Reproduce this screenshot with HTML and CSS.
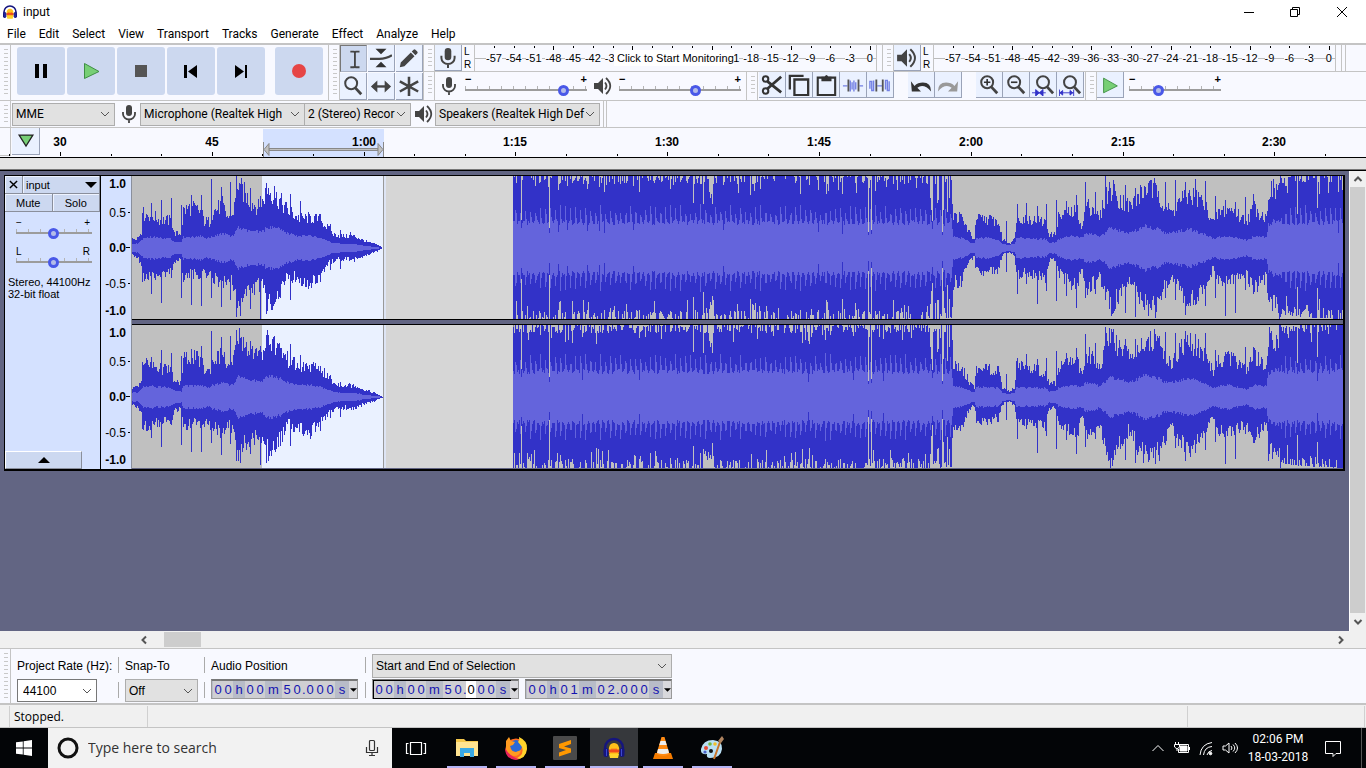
FILE: index.html
```html
<!DOCTYPE html>
<html lang="en">
<head>
<meta charset="utf-8">
<title>input</title>
<link rel="stylesheet" href="styles.css">
</head>
<body>
<svg class="defs" aria-hidden="true">
  <symbol id="logo" viewBox="0 0 24 24">
    <path d="M3 16V12a9 9 0 0 1 18 0v4" fill="none" stroke="#15157e" stroke-width="2.4"/>
    <path d="M7 17c-1-6 1-10 5-10s6 4 5 10l-2 3H9z" fill="#ffc21a"/>
    <path d="M6 15l2-2 1 1 1-2 1 2 1-2 1 2 1-2 1 2 1-1 2 2-2 2-1-1-1 1-1-1-1 1-1-1-1 1-1-1-1 1z" fill="#f04a1c"/>
    <path d="M7 18h10l-1 4H8z" fill="#ffd52c"/>
    <rect x="1.500" y="12" width="5" height="9" rx="2.500" fill="#15157e"/>
    <rect x="17.500" y="12" width="5" height="9" rx="2.500" fill="#15157e"/>
    <path d="M4.500 13v7M19.500 13v7" stroke="#3d49ce" stroke-width="1"/>
  </symbol>
  <symbol id="mic" viewBox="0 0 20 20">
    <rect x="7" y="1" width="6" height="11" rx="3" fill="#444"/>
    <path d="M4 8v2a6 5.500 0 0 0 12 0V8M10 15v4" fill="none" stroke="#444" stroke-width="1.800"/>
  </symbol>
  <symbol id="speaker" viewBox="0 0 20 20">
    <path d="M1 7h4l5-5v16l-5-5H1z" fill="#444"/>
    <path d="M12 6.500q3 3.500 0 7M13 2q8.500 8 0 16" fill="none" stroke="#444" stroke-width="1.800"/>
  </symbol>
  <symbol id="lens" viewBox="0 0 24 24">
    <circle cx="10" cy="9" r="6.500" fill="none" stroke="#444" stroke-width="2.200"/>
    <path d="M14 13.500l7 7.500" stroke="#444" stroke-width="3"/>
  </symbol>
</svg>

<header class="titlebar">
  <svg class="app-icon"><use href="#logo"/></svg>
  <span class="title">input</span>
  <div class="window-buttons">
    <button aria-label="Minimize"><svg viewBox="0 0 12 12"><path d="M1 6.500h10"/></svg></button>
    <button aria-label="Restore"><svg viewBox="0 0 12 12"><path d="M1.500 3.500h7v7h-7zM3.500 3.500v-2h7v7h-2"/></svg></button>
    <button aria-label="Close"><svg viewBox="0 0 12 12"><path d="M1 1l10 10M11 1L1 11"/></svg></button>
  </div>
</header>

<nav class="menubar">
  <button>File</button><button>Edit</button><button>Select</button><button>View</button><button>Transport</button><button>Tracks</button><button>Generate</button><button>Effect</button><button>Analyze</button><button>Help</button>
</nav>

<section class="toolbars">
  <div class="toolbar">
    <i class="grip"></i>
    <div class="transport">
      <button aria-label="Pause"><svg viewBox="0 0 48 48"><path d="M18 17h4v14h-4zM26 17h4v14h-4z"/></svg></button>
      <button aria-label="Play"><svg viewBox="0 0 48 48"><path d="M17.500 16.500L32 24.500 17.500 31.500z" fill="#77cf75" stroke="#3f8f45"/></svg></button>
      <button aria-label="Stop"><svg viewBox="0 0 48 48"><path d="M18 18h12v12H18z" fill="#555"/></svg></button>
      <button aria-label="Skip to start"><svg viewBox="0 0 48 48"><path d="M17 18h3v13h-3zM30 18v13l-9-6.500z"/></svg></button>
      <button aria-label="Skip to end"><svg viewBox="0 0 48 48"><path d="M28 18h2v13h-2zM18 18v13l9-6.500z"/></svg></button>
      <button class="record" aria-label="Record"><svg viewBox="0 0 48 48"><circle cx="24" cy="24" r="7" fill="#e64545"/></svg></button>
    </div>
  </div>
  <div class="toolbar">
    <i class="grip"></i>
    <div class="tools">
      <button class="tool pressed" aria-label="Selection tool"><svg viewBox="0 0 24 24"><path d="M8 4h4l1 1 1-1h4M13 5v15M8 21h4l1-1 1 1h4" fill="none" stroke="#444" stroke-width="2"/></svg></button>
      <button class="tool" aria-label="Envelope tool"><svg viewBox="0 0 24 24"><path d="M6 2h12l-6 6zM6 22h12l-6-6z" fill="#333"/><path d="M0 13h10q8 0 14-4" fill="none" stroke="#444" stroke-width="2.500"/></svg></button>
      <button class="tool" aria-label="Draw tool"><svg viewBox="0 0 24 24"><path d="M2 22l1-5L14 6l4 4L7 21zM15 5l2-2q1-1 2 0l2 2q1 1 0 2l-2 2z" fill="#444"/></svg></button>
      <button class="tool" aria-label="Zoom tool"><svg viewBox="0 0 24 24"><use href="#lens"/></svg></button>
      <button class="tool" aria-label="Time shift tool"><svg viewBox="0 0 24 24"><path d="M3 12.500h18" stroke="#444" stroke-width="2.600"/><path d="M8 6v13l-7-6.500zM16 6v13l7-6.500z" fill="#444"/></svg></button>
      <button class="tool" aria-label="Multi-tool"><svg viewBox="0 0 24 24"><path d="M12 2v21M2 7l20 11M22 7L2 18" stroke="#444" stroke-width="2.800"/></svg></button>
    </div>
  </div>
  <div class="stack">
    <div class="strip">
      <div class="toolbar meter-bar">
        <i class="grip"></i>
        <button class="tool" aria-label="Recording meter"><svg viewBox="0 0 20 20"><use href="#mic"/></svg></button>
        <div class="channels"><span>L</span><span>R</span></div>
        <div class="meter"><div class="scale" data-covered="-36 -33 -30 -27 -24"></div><span class="monitor">Click to Start Monitoring</span></div>
      </div>
      <div class="toolbar meter-bar">
        <i class="grip"></i>
        <button class="tool" aria-label="Playback meter"><svg viewBox="0 0 20 20"><use href="#speaker"/></svg></button>
        <div class="channels"><span>L</span><span>R</span></div>
        <div class="meter"><div class="scale"></div></div>
      </div>
      <div class="strip-end"></div>
    </div>
    <div class="strip">
      <div class="toolbar mixer">
        <i class="grip"></i>
        <svg class="device-icon"><use href="#mic"/></svg>
        <div class="slider"><div><span>−</span><span>+</span></div><input type="range" min="0" max="100" value="84" aria-label="Recording volume"></div>
        <svg class="device-icon"><use href="#speaker"/></svg>
        <div class="slider"><div><span>−</span><span>+</span></div><input type="range" min="0" max="100" value="64" aria-label="Playback volume"></div>
      </div>
      <div class="toolbar edit">
        <i class="grip"></i>
        <div class="group">
          <button class="tool" aria-label="Cut"><svg viewBox="0 0 24 24"><g fill="none" stroke="#333" stroke-width="2.200"><circle cx="5" cy="5.500" r="3"/><circle cx="5" cy="18.500" r="3"/><path d="M7 8l15 12M7 16L22 3" stroke-width="3"/></g></svg></button>
          <button class="tool" aria-label="Copy"><svg viewBox="0 0 24 24"><path d="M2 17V2h15M7 6h15v17H7z" fill="none" stroke="#333" stroke-width="2.500"/></svg></button>
          <button class="tool" aria-label="Paste"><svg viewBox="0 0 24 24"><path d="M3 4h19v19H3z" fill="none" stroke="#333" stroke-width="2.300"/><path d="M7 3h3.500q2-4 4 0H18v5H7z" fill="#333"/></svg></button>
          <button class="tool" aria-label="Trim audio"><svg viewBox="0 0 24 24"><path d="M1 13h5M19 13h4M9 7v12M11 9v8M13 7v12M15 9v8" stroke="#7380e4" stroke-width="1.500"/><path d="M7 6v13M18 6v13" stroke="#555" stroke-width="2"/></svg></button>
          <button class="tool" aria-label="Silence audio"><svg viewBox="0 0 24 24"><path d="M1 16V8h2v10h2V7M18 17V7h2v11h2V8M9 13h6" fill="none" stroke="#7380e4" stroke-width="1.500"/><path d="M8 6v13M15 6v13" stroke="#555" stroke-width="2"/></svg></button>
        </div>
        <div class="group">
          <button class="tool" aria-label="Undo"><svg viewBox="0 0 24 24"><path d="M1 8l1 11h10l-4-4q7-5 15 4 0-12-14-9-3 1-4 3z" fill="#333"/></svg></button>
          <button class="tool" aria-label="Redo"><svg viewBox="0 0 24 24"><path d="M23 8l-1 11H12l4-4q-7-5-15 4 0-12 14-9 3 1 4 3z" fill="#999"/></svg></button>
        </div>
        <div class="group">
          <button class="tool" aria-label="Zoom in"><svg viewBox="0 0 24 24"><use href="#lens"/><path d="M10 5.500v7M6.500 9h7" stroke="#333" stroke-width="1.800"/></svg></button>
          <button class="tool" aria-label="Zoom out"><svg viewBox="0 0 24 24"><use href="#lens"/><path d="M6.500 9h7" stroke="#333" stroke-width="1.800"/></svg></button>
          <button class="tool" aria-label="Fit selection"><svg viewBox="0 0 24 24"><use href="#lens" x="2"/><path d="M0 20.500h15M4 17l4 3.500L4 24zM12 17l-4 3.500 4 3.500z" fill="#3232c8" stroke="#3232c8"/></svg></button>
          <button class="tool" aria-label="Fit project"><svg viewBox="0 0 24 24"><use href="#lens" x="2"/><path d="M0.500 17v7M16 17v7M1 20.500h15M4 18l-3 2.500L4 23zM12 18l3 2.500-3 2.500z" fill="#3232c8" stroke="#3232c8"/></svg></button>
        </div>
      </div>
      <div class="toolbar">
        <i class="grip"></i>
        <button class="tool" aria-label="Play at speed"><svg viewBox="0 0 24 24"><path d="M5 4.500L20 13 5 20.500z" fill="#77cf75" stroke="#3f8f45"/></svg></button>
        <div class="slider speed"><div><span>−</span><span>+</span></div><input type="range" min="0" max="100" value="30" aria-label="Playback speed"></div>
      </div>
    </div>
  </div>
</section>

<section class="devices">
  <i class="grip"></i>
  <select class="host" aria-label="Audio host"><option>MME</option></select>
  <svg class="device-icon"><use href="#mic"/></svg>
  <select class="rec" aria-label="Recording device"><option>Microphone (Realtek High</option></select>
  <select class="chan" aria-label="Recording channels"><option>2 (Stereo) Recor</option></select>
  <svg class="device-icon"><use href="#speaker"/></svg>
  <select class="play" aria-label="Playback device"><option>Speakers (Realtek High Def</option></select>
  <i class="end"></i>
</section>

<section class="ruler">
  <i class="ruler-edge"></i>
  <button class="tool pin" aria-label="Pinned play head"><svg viewBox="0 0 24 24"><path d="M4.500 5.500h15L12 17.500z" fill="#77cf75" stroke="#222" stroke-width="1.400"/></svg></button>
  <svg class="timeline" id="timeline"></svg>
</section>
<div class="ruler-gap"></div>

<main class="workspace">
  <div class="tracks">
    <article class="track">
      <aside class="panel">
        <div class="panel-row name"><button aria-label="Close track"><svg viewBox="0 0 10 10"><path d="M1 1l8 8M9 1L1 9" stroke="#000" stroke-width="1.600"/></svg></button><button class="track-menu">input<svg viewBox="0 0 12 6"><path d="M0 0h12L6 6z"/></svg></button></div>
        <div class="panel-row"><button>Mute</button><button>Solo</button></div>
        <div class="slider gain"><div><span>−</span><span>+</span></div><input type="range" min="0" max="100" value="49" aria-label="Gain"></div>
        <div class="slider gain"><div><span>L</span><span>R</span></div><input type="range" min="0" max="100" value="49" aria-label="Pan"></div>
        <p>Stereo, 44100Hz<br>32-bit float</p>
        <button class="collapse" aria-label="Collapse"><svg viewBox="0 0 12 6"><path d="M0 6h12L6 0z"/></svg></button>
      </aside>
      <div class="vrulers"><svg class="vruler"></svg><svg class="vruler"></svg></div>
      <div class="waves">
        <svg class="wave" viewBox="0 0 1211 143" preserveAspectRatio="none" role="img" aria-label="Left channel"></svg>
        <svg class="wave" viewBox="0 0 1211 143" preserveAspectRatio="none" role="img" aria-label="Right channel"></svg>
      </div>
    </article>
  </div>
  <div class="vscroll">
    <button aria-label="Scroll up"><svg viewBox="0 0 10 10"><path d="M1.500 7L5 3.500 8.500 7"/></svg></button>
    <i></i>
    <button aria-label="Scroll down"><svg viewBox="0 0 10 10"><path d="M1.500 3L5 6.500 8.500 3"/></svg></button>
  </div>
</main>
<div class="hscroll">
  <button aria-label="Scroll left"><svg viewBox="0 0 10 10"><path d="M7 1.500L3.500 5 7 8.500"/></svg></button>
  <i></i>
  <button aria-label="Scroll right"><svg viewBox="0 0 10 10"><path d="M3 1.500L6.500 5 3 8.500"/></svg></button>
</div>

<section class="selection">
  <i class="grip"></i>
  <div class="field rate"><label for="rate">Project Rate (Hz):</label><select id="rate"><option>44100</option></select></div>
  <div class="sep"><i></i><i></i></div>
  <div class="field snap"><label for="snap">Snap-To</label><select id="snap"><option>Off</option></select></div>
  <div class="sep"><i></i><i></i></div>
  <div class="field"><span class="label">Audio Position</span><div class="time" data-time="00h00m50.000s"></div></div>
  <div class="sep wide"><i></i><i></i></div>
  <div class="field range"><select aria-label="Selection mode"><option>Start and End of Selection</option></select><div class="times"><div class="time focused" data-time="00h00m50.000s"></div><div class="time" data-time="00h01m02.000s"></div></div></div>
</section>

<footer class="status"><span>Stopped.</span><span></span><span></span></footer>

<div class="taskbar">
  <button class="start" aria-label="Start"><svg viewBox="0 0 16 16"><path d="M0 2.300L6.800 1.400v6.200H0zM7.600 1.300L16 0v7.600H7.600zM0 8.400h6.800v6.200L0 13.700zM7.600 8.400H16V16l-8.400-1.300z" fill="#fff"/></svg></button>
  <div class="search">
    <svg class="cortana" viewBox="0 0 22 22"><circle cx="11" cy="11" r="9" fill="none" stroke="#111" stroke-width="3"/></svg>
    <input type="text" placeholder="Type here to search" aria-label="Search">
    <svg class="search-mic" viewBox="0 0 14 18"><rect x="4.500" y="1.500" width="5" height="10" rx="1"/><path d="M1.500 8v5.500h11V8M7 13.500v3M4 16.500h6"/></svg>
  </div>
  <button class="task view" aria-label="Task view"><svg viewBox="0 0 24 24"><path d="M6.500 6.500h11v12h-11zM4.500 7.500h-2v10h2M19.500 7.500h2v10h-2" fill="none" stroke="#fff" stroke-width="1.200"/></svg></button>
  <button class="task open" aria-label="File Explorer"><svg viewBox="0 0 24 24"><path d="M1 3h8l2 2h12v5H1z" fill="#f5c84c"/><path d="M1 6h22v14H1z" fill="#ffe491"/><path d="M5 21v-9h14v9h-4v-4H9v4z" fill="#3aa9e4"/></svg></button>
  <button class="task open" aria-label="Firefox"><svg viewBox="0 0 24 24"><circle cx="12" cy="13" r="10.500" fill="#ff6a21"/><circle cx="12" cy="10" r="6" fill="#2869d8"/><path d="M15 1q9 4 8 12-1 10-11 10 9-5 6-12-2-3-4-5 2-2 1-5z" fill="#ffd42c"/><path d="M2 5l3-4 2 4 4 1-2 3-3 1q1 6 6 6l5-2q-1 6-7 6-9-1-8-9z" fill="#ff9b20"/><path d="M1 12q0 11 11 12l3-1q-9-2-14-11z" fill="#e8235a"/></svg></button>
  <button class="task open" aria-label="Sublime Text"><svg viewBox="0 0 24 24"><rect width="24" height="24" rx="1" fill="#4a4a4a"/><path d="M6 8l12-4v4l-7 2.500 7 2v4L6 20.500v-4l7-2.500-7-2z" fill="#ff9800"/></svg></button>
  <button class="task open active" aria-label="Audacity"><svg><use href="#logo"/></svg></button>
  <button class="task open" aria-label="VLC"><svg viewBox="0 0 24 24"><path d="M4 17h16l2 6H2z" fill="#f57c00"/><path d="M10.500 1h3l5 17q-6 4-13 0z" fill="#ff8b13"/><path d="M9.500 5h5l1.200 4H8.300zM7 13h10l1 4q-6 2-12 0z" fill="#eee"/></svg></button>
  <button class="task open" aria-label="Paint"><svg viewBox="0 0 24 24"><path d="M1 13Q3 4 13 4q10 1 9 9-1 9-12 9-4 0-3-4-7 1-6-5z" fill="#b9e0f4"/><circle cx="6" cy="12" r="2" fill="#e94b35"/><circle cx="10" cy="8" r="1.800" fill="#71b843"/><circle cx="15" cy="8" r="1.800" fill="#f4bf28"/><circle cx="5" cy="16" r="1.600" fill="#4a62c9"/><circle cx="11" cy="15" r="2" fill="#111"/><path d="M14 23l6-17" stroke="#c9752b" stroke-width="2"/><path d="M18 5l4-5 2 3-3 4z" fill="#b08560"/></svg></button>
  <div class="tray">
    <svg viewBox="0 0 16 16"><path d="M2.500 11L8 5.500l5.500 5.500"/></svg>
    <svg viewBox="0 0 16 16"><path d="M5 4.500h9.500v8h-10V9M15.500 7v3M.5 4.500h5V7L3 9 .5 7zM1.500 4V2M4.500 4V2M3 9v2"/><path d="M6 6h7v5H6z" fill="#fff"/></svg>
    <svg viewBox="0 0 16 16"><path d="M2 15Q3 4 14 2.500M5.500 15q1-8 8.500-8.500M9 15q1-4 5-4.500"/><circle cx="12.500" cy="13.500" r="1.300" fill="#fff"/></svg>
    <svg viewBox="0 0 16 16"><path d="M1 6h2.500L7 3v10l-3.500-3H1zM9 6q2 2 0 4M11 4.500q3.500 3.500 0 7M13 3q5 5 0 10"/></svg>
    <div class="clock"><time>02:06 PM</time><time>18-03-2018</time></div>
    <svg class="notes" viewBox="0 0 18 18"><path d="M1.500 2.500h15v12H12l-3 3v-3H1.500z"/></svg>
    <i></i>
  </div>
</div>
<script src="app.js"></script>
</body>
</html>
```
FILE: styles.css
```css
* { box-sizing: border-box; }
body {
  margin: 0;
  min-height: 100vh;
  display: flex;
  flex-direction: column;
  background: #f8f9ff;
  color: #000;
  font: 12px/16px Roboto, "Open Sans", sans-serif;
}
button, input, select { font: inherit; color: inherit; }
button {
  border: 0;
  padding: 0;
  background: none;
  display: flex;
  align-items: center;
  justify-content: center;
}
svg { display: block; flex: none; }
.defs { display: none; }

.titlebar { display: flex; align-items: center; height: 24px; background: #fff; }
.app-icon { width: 16px; height: 16px; margin: 0 5px 0 2px; }
.window-buttons { display: flex; margin-left: auto; height: 20px; }
.window-buttons button { width: 46px; }
.window-buttons button:last-child { width: 48px; }
.window-buttons svg { width: 12px; height: 12px; fill: none; stroke: #000; }

.menubar { display: flex; height: 19px; background: #fff; }
.menubar button { padding: 0 6px 0 7px; }

.toolbars { display: flex; height: 58px; border-top: 2px solid #c4c4c4; border-bottom: 1px solid #c4c4c4; }
.toolbar { display: flex; border-right: 1px solid #c4c4c4; }
.grip {
  flex: none;
  width: 11px;
  align-self: stretch;
  border-right: 1px solid #c4c4c4;
  background: repeating-linear-gradient(#c8c8c8 0 1px, transparent 1px 4px) 4px 4px / 4px calc(100% - 8px) no-repeat;
}
.transport { display: flex; gap: 2px; padding: 2px 5px 4px 6px; }
.transport button { width: 48px; height: 48px; border-radius: 3px; background: #ccd8ef; }
.transport .record { margin-left: 8px; }
.transport svg { width: 48px; height: 48px; }
.tools { display: grid; grid-template-columns: repeat(3, 27px); gap: 1px; }
.tool { width: 27px; height: 27px; flex: none; background: #eaf1ff; border-right: 1px solid #9aa3b8; border-bottom: 1px solid #9aa3b8; }
.tool svg { width: 22px; height: 22px; }
.tool.pressed { background: #ccd8ef; border: 1px solid #aab2c4; border-top-color: #777; border-left-color: #777; }
.stack { flex: 1; min-width: 0; }
.strip { display: flex; height: 27px; }
.strip:first-child { border-bottom: 1px solid #c4c4c4; }
.strip:last-child { height: 28px; }
.stack .tool { height: 26px; }
.meter-bar { flex: 1; min-width: 0; padding-right: 5px; }
.strip-end { width: 24px; border-left: 1px solid #f8f9ff; padding-left: 2px; }
.strip-end::before { content: ""; display: block; width: 1px; height: 100%; background: #c4c4c4; }
.channels { display: flex; flex-direction: column; width: 12px; padding: 0 2px; font: 10px/13px "Liberation Sans", sans-serif; }
.meter { flex: 1; min-width: 0; position: relative; border-left: 1px solid #c4c4c4; border-right: 1px solid #c4c4c4; background: linear-gradient(#bbb, #bbb) 0 13px / 100% 1px no-repeat; }
.scale { display: flex; justify-content: space-between; margin: 0 -3px 0 10px; font: 11px/14px "Liberation Sans", sans-serif; }
.scale span { width: 18px; height: 20px; padding-top: 6px; text-align: center; background: linear-gradient(#000, #000) 9px 1px / 1px 2px no-repeat; }
.scale span:nth-child(4n) { background-size: 1px 4px; }
.scale b { font-weight: normal; background: #f8f9ff; }
.monitor { position: absolute; left: 139px; top: 5px; padding: 0 0 0 3px; background: #fff; font: 11px/16px "Liberation Sans", sans-serif; white-space: nowrap; }

.device-icon { width: 20px; height: 20px; align-self: center; }
.mixer { padding-right: 3px; }
.mixer .device-icon { margin: 0 4px; }
.slider { width: 122px; padding-top: 1px; flex: none; }
.mixer .slider { margin: 0 2px; }
.slider div { display: flex; justify-content: space-between; height: 11px; font: bold 11px/12px "Liberation Sans", sans-serif; }
.slider input {
  display: block;
  appearance: none;
  width: 100%;
  height: 12px;
  margin: 0;
  background:
    linear-gradient(#9c9c9c, #9c9c9c) 0 5px / 100% 2px no-repeat,
    repeating-linear-gradient(90deg, #b4b4b4 0 1px, transparent 1px 12px) 0 2px / 100% 3px no-repeat;
}
.slider input::-webkit-slider-thumb { appearance: none; width: 11px; height: 11px; border-radius: 50%; border: 3px solid #4958e8; background: #b4bce8; }
.edit .group { display: flex; padding-left: 1px; }
.edit .group + .group { padding-left: 14px; }
.edit { padding-right: 1px; }
.slider.speed { width: 92px; margin-left: 5px; }
.strip .toolbar:last-child { border-right: 0; }

.devices { display: flex; align-items: center; height: 27px; border-bottom: 1px solid #c4c4c4; }
select {
  appearance: none;
  height: 23px;
  border: 1px solid #adadad;
  border-radius: 0;
  padding: 0 16px 0 3px;
  white-space: nowrap;
  background: #e1e1e1 url("data:image/svg+xml,%3Csvg xmlns='http://www.w3.org/2000/svg' width='10' height='6'%3E%3Cpath d='M1 1l4 4 4-4' fill='none' stroke='%23555'/%3E%3C/svg%3E") right 4px center no-repeat;
}
.devices .device-icon { margin: 0 2px 0 3px; }
.devices .grip { margin-right: 1px; }
.host { width: 103px; margin-right: 1px; }
.rec { width: 165px; margin-left: -1px; }
.chan { width: 107px; margin-left: -1px; padding-right: 12px; }
.play { width: 165px; margin-left: -1px; padding-right: 12px; }
.end { width: 4px; margin-left: 3px; align-self: stretch; border: 1px solid #c4c4c4; border-width: 0 1px; }

.ruler { display: flex; height: 30px; border-bottom: 1px solid #000; }
.ruler-edge { width: 11px; height: 28px; border: 1px solid #c4c4c4; border-width: 0 1px 1px 0; }
.pin { width: 28px; margin-left: 1px; }
.timeline { flex: 1; min-width: 0; height: 29px; margin-left: -40px; position: relative; pointer-events: none; overflow: hidden; }
.timeline text { font: bold 12px "Liberation Sans", sans-serif; text-anchor: middle; }
.ruler-gap { height: 13px; background: #e3e3e3; border-bottom: 1px solid #000; box-shadow: inset 0 -1px #777; }

.workspace { flex: 1; display: flex; min-height: 0; background: #626583; }
.tracks { flex: 1; min-width: 0; padding: 4px 4px 0 4px; }
.track { display: flex; height: 296px; border: 1px solid #000; border-bottom-width: 2px; border-right-width: 2px; }
.panel { width: 96px; display: flex; flex-direction: column; background: #d4e1ff; border-right: 1px solid #000; font: 11px/12px "Liberation Sans", sans-serif; }
.panel-row { display: flex; height: 18px; }
.panel-row button { flex: 1; background: #ccd8f0; border: 1px solid #8a8f9c; border-width: 0 1px 1px 0; box-shadow: inset 1px 1px #eef3ff; }
.panel-row.name button:first-child { flex: none; width: 18px; }
.panel-row svg { width: 9px; height: 9px; }
.panel-row .track-menu { justify-content: space-between; padding: 0 2px 0 3px; }
.track-menu svg { width: 12px; height: 6px; }
.slider.gain { width: 76px; margin: 4px 0 0 11px; padding-top: 1px; }
.slider.gain div { height: 10px; font-weight: normal; padding-right: 2px; }
.slider.gain:nth-child(4) { margin-top: 6px; }
.slider.gain div span { font-size: 10px; }
.panel p { margin: 8px 0 0 3px; white-space: nowrap; }
.collapse { width: 77px; height: 18px; margin-top: auto; background: #ccd8f0; border: 1px solid #8a8f9c; border-top-color: #fff; border-left-color: #fff; }
.collapse svg { width: 12px; height: 6px; }
.vrulers { width: 31px; background: #d4e1ff; display: flex; flex-direction: column; gap: 6px; border-right: 1px solid #8a8f9c; }
.vruler { width: 30px; height: 143px; overflow: visible; }
.vruler text { font: 12px "Liberation Sans", sans-serif; text-anchor: end; }
.vruler .strong { font-weight: bold; }
.waves { flex: 1; min-width: 0; background: #626583; display: flex; flex-direction: column; gap: 4px; }
.wave { width: 100%; height: 144px; border-bottom: 1px solid #000; }
.wave + .wave { border-top: 1px solid #000; border-bottom: 0; }

.vscroll { width: 17px; display: flex; flex-direction: column; background: #f0f0f0; border-left: 1px solid #fff; }
.vscroll i { flex: 1; background: #cdcdcd; margin-right: 1px; }
.vscroll button { height: 16px; }
.vscroll button:last-child { height: 18px; }
.vscroll svg, .hscroll svg { width: 10px; height: 10px; fill: none; stroke: #555; stroke-width: 2; }
.hscroll { display: flex; height: 18px; padding: 1px 17px 1px 136px; background: #f0f0f0; border-bottom: 1px solid #c4c4c4; }
.hscroll button { width: 16px; }
.hscroll i { width: 37px; margin: 0 auto 0 12px; background: #cdcdcd; }

.selection { display: flex; height: 56px; border-bottom: 2px solid #c4c4c4; font-family: "Liberation Sans", sans-serif; }
.field { display: flex; flex-direction: column; }
.field label, .field .label { height: 30px; padding-top: 9px; white-space: nowrap; }
.rate { margin-left: 6px; width: 95px; }
.rate select { width: 80px; background-color: #fff; border-color: #777; padding-left: 5px; }
.snap select { width: 73px; }
.field.range select { width: 300px; height: 24px; margin: 5px 0 1px; }
.sep { width: 7px; margin-left: 6px; display: flex; flex-direction: column; gap: 9px; padding-top: 8px; }
.sep i { width: 1px; height: 16px; background: #aaa; }
.sep.wide { margin-left: 7px; }
.times { display: flex; gap: 6px; }
.time { display: flex; width: 147px; height: 20px; padding-left: 1px; border: 1px solid #999; border-top: 2px solid #777; background: #b8bcc8; color: #1414b0; font-size: 13px; line-height: 17px; text-align: center; }
.time span { width: 10px; background: #cfcfd2; }
.time .h { width: 12px; background: none; }
.time .m { width: 17px; background: none; }
.time .dot { width: 3px; }
.time .s { width: 14px; background: none; }
.time button { flex: 1; background: #d8d8dc; }
.time button svg { width: 7px; height: 4px; }
.digits { display: flex; }
.focused .digits { outline: 1px solid #000; }
.focused .digits span:nth-child(10) { background: #fff; color: #000; }

.status { display: flex; height: 23px; background: #f0f0f0; border-bottom: 1px solid #c4c4c4; padding: 1px 1px 0 9px; font: 12px/22px "Open Sans", sans-serif; }
.status span { border-left: 1px solid #d0d0d0; padding-left: 4px; width: 138px; }
.status span:nth-child(2) { flex: 1; }
.status span:last-child { width: 178px; border-right: 1px solid #d0d0d0; }

.taskbar { display: flex; height: 40px; background: #030507; color: #fff; }
.start { width: 48px; }
.start svg { width: 16px; height: 16px; }
.search { display: flex; align-items: center; width: 344px; padding: 0 13px 0 9px; background: #f2f2f2; }
.cortana { width: 22px; height: 22px; }
.search input { flex: 1; min-width: 0; margin-left: 8px; border: 0; padding: 0 1px; background: none; color: #333; font: 14px/20px "Open Sans", sans-serif; }
.search input::placeholder { color: #333; }
.search-mic { width: 14px; height: 18px; fill: none; stroke: #333; stroke-width: 1.2; }
.task svg { width: 24px; height: 24px; }
.view { width: 48px; margin-right: 3px; }
.open { margin: 0 5px 0 4px; width: 40px; box-shadow: inset 0 -2px #b4b4f4; }
.active { width: 48px; margin: 0 1px 0 0; background: #36383c; }
.tray { display: flex; align-items: center; margin-left: auto; }
.tray svg { width: 16px; height: 16px; margin-right: 8px; fill: none; stroke: #fff; }
.clock { display: flex; flex-direction: column; align-items: center; width: 64px; margin-right: 14px; line-height: 18px; }
.tray .notes { width: 18px; height: 18px; margin-right: 19px; }
.tray i { width: 5px; height: 40px; border-left: 1px solid #555; }
```
FILE: app.js
```javascript
const rect = (x, y, w, h, fill) => `<rect x="${x}" y="${y}" width="${w}" height="${h}" fill="${fill}"/>`;

// Level meters: -57 dB up to 0 dB in steps of 3; labels under the monitoring hint are left out
document.querySelectorAll('.scale').forEach(scale => {
  const covered = (scale.dataset.covered || '').split(' ');
  for (let db = -57; db <= 0; db += 3) scale.innerHTML += covered.includes(String(db)) ? '<span></span>' : `<span><b>${db}</b></span>`;
});

// Time ruler: one tick every 5 seconds, a label every 15
const labels = ['30', '45', '1:00', '1:15', '1:30', '1:45', '2:00', '2:15', '2:30'];
let ruler = rect(263, 1, 121, 28, '#d4e1ff');
for (let i = -1; i < 26; i++) {
  const x = Math.round(60 + i * 50.6);
  const major = i % 3 === 0;
  ruler += rect(x, major ? 24 : 26, 1, major ? 4 : 2, '#000');
  if (major) ruler += `<text x="${x}" y="18">${labels[i / 3]}</text>`;
}
ruler += '<path d="M263.500 14v15M383.500 14v15" stroke="#888"/><path d="M269 20.500h109v2H269z" fill="#c0c0c0" stroke="#888"/><path d="M264 21.500l5-6v12zM383 21.500l-5-6v12z" fill="#c0c0c0" stroke="#888"/>';
document.getElementById('timeline').innerHTML = ruler;

document.querySelectorAll('.vruler').forEach(el => {
  el.innerHTML = [['1.0', 12, 1], ['0.5', 41, 0], ['0.0', 76, 1], ['-0.5', 112, 0], ['-1.0', 139, 1]]
    .map(([t, y, strong]) => `<text x="25" y="${y}" class="${strong ? 'strong' : ''}">${t}</text>`).join('')
    + rect(27, 36, 2, 1, '#000') + rect(25, 71, 4, 1, '#000') + rect(27, 107, 2, 1, '#000');
});

// Envelope: [x, peak above, peak below, rms]
const envelope = [
  [132,9,8,4],[138,11,11,5],[141,17,18,8],[143,35,32,10],[150,34,28,11],[160,29,27,10],[171,28,24,9],[174,15,14,6],[181,15,12,6],[183,38,30,11],
  [190,42,28,11],[201,37,28,12],[204,27,26,10],[209,27,28,10],[213,38,30,12],[222,44,36,14],[226,34,34,14],[230,28,28,12],[234,42,40,13],
  [237,68,60,21],[244,56,48,18],[250,48,42,17],[260,40,38,16],[263,50,42,17],[267,62,55,21],[275,52,52,20],[280,48,42,18],[288,38,28,14],
  [300,30,32,12],[310,31,36,12],[320,29,28,10],[328,20,16,7],[333,14,13,5],[345,12,11,4],[355,12,12,4],[365,7,7,2],[375,4,4,1],[383,0,0,0],
  [384,0,0,0],[512,0,0,0],[513,73,71,28],[930,73,71,28],[951,72,70,27],[953,32,36,11],[961,31,33,10],[966,22,18,8],[971,12,11,5],
  [974,10,10,5],[976,30,24,10],[985,30,24,10],[998,27,22,9],[1002,9,7,4],[1009,5,4,3],[1014,9,8,4],[1016,32,26,10],[1030,30,26,9],[1045,26,30,9],
  [1049,14,12,5],[1055,14,12,6],[1058,32,26,9],[1070,36,36,12],[1077,38,38,11],[1082,20,18,11],[1085,44,44,14],[1093,41,36,14],[1099,29,27,11],
  [1105,54,48,15],[1110,60,62,20],[1120,50,48,17],[1130,42,32,15],[1135,50,48,17],[1145,60,60,22],[1158,60,58,19],[1164,42,40,15],[1172,36,30,15],
  [1180,50,46,17],[1190,55,52,19],[1200,50,44,15],[1208,38,30,12],[1213,26,22,9],[1218,36,35,11],[1230,40,35,12],[1240,32,30,9],[1246,28,28,8],
  [1254,42,42,12],[1262,34,33,11],[1266,30,30,11],[1268,60,56,24],[1275,58,56,27],[1281,70,66,27],[1300,73,69,28],[1344,74,71,28]
];
const spikes = [
  [142,35,34],[151,45,46],[161,48,55],[171,50,30],[181,43,50],[191,53,57],[201,53,58],[211,69,50],[221,61,59],[230,66,52],[236,72,69],[240,64,68],
  [250,60,61],[260,52,72],[266,65,66],[274,62,56],[280,50,50],[290,54,52],[300,47,30],[309,34,38],[320,34,34],[330,24,22],[340,18,21],[350,16,12],
  [1006,27,24],[1017,44,46],[1026,45,36],[1037,42,56],[1046,44,43],[1056,48,53],[1066,47,48],[1076,53,60],[1085,66,50],[1095,56,46],[1105,72,52],[1113,68,65],
  [1125,63,65],[1135,60,69],[1148,65,68],[1155,65,70],[1165,66,50],[1175,68,52],[1185,66,67],[1195,69,57],[1205,67,58],[1215,52,50],[1225,48,68],[1235,46,65],[1245,51,42],[1253,54,46]
];
// Columns of the loud passage where the level dips: x -> peak
const dips = {521:28,549:20,693:45,703:44,709:56,710:50,711:54,712:44,868:16,869:60,871:18,930:50,931:38,932:27,937:45,938:48,942:16,943:38,947:36,949:50,1297:34,1317:40};

const noise = (n, seed) => { const v = Math.sin(n * 12.9898 + seed * 78.233) * 43758.5453; return v - Math.floor(v); };

function at(x) {
  let i = 0;
  while (i < envelope.length - 2 && envelope[i + 1][0] <= x) i++;
  const a = envelope[i], b = envelope[i + 1], t = (x - a[0]) / (b[0] - a[0]);
  return [1, 2, 3].map(k => a[k] + (b[k] - a[k]) * t);
}

document.querySelectorAll('.wave').forEach((svg, channel) => {
  let peaks = '', rms = '';
  for (let x = 132; x < 1343; x++) {
    if (x > 382 && x < 513) continue;
    let [up, down, body] = at(x);
    const loud = (x >= 513 && x < 952) || x >= 1281;
    const r = noise(x, 1 + channel * 3), q = noise(x, 2 + channel * 3);
    if (loud) {
      up -= r > .92 ? 8 + q * 12 : r > .5 - channel * .2 ? q * 9 : 0;
      down -= q > .9 ? 6 + r * 14 : q > .45 ? r * 9 : 0;
      body += x % 5 === 0 ? 5 + r * 11 : x % 5 === 1 ? q * 7 : -q * 5;
      if (r > .97) body -= 9;
      const dip = dips[x];
      if (dip) { up = dip; down = dip + 8 * q; body = Math.min(body, dip * .6 + 3); }
    } else {
      up *= .76 + r * .42;
      down *= .76 + q * .42;
      body *= .9 + noise(x, 9 + channel) * .2;
    }
    const spike = spikes.find(s => s[0] === x);
    if (spike) { up = spike[1] - channel * 6 * r; down = spike[2] - channel * 5 * q; }
    const px = x - 132;
    const bar = (a, b) => `M${px} ${a}h1V${b}h-1z`;
    peaks += bar(Math.max(0, Math.round(72 - up)), Math.min(143, Math.round(72 + down)));
    if (body > .5) rms += bar(Math.round(72 - body), Math.round(72 + body));
  }
  svg.innerHTML = '<g shape-rendering="crispEdges">' + rect(0, 0, 1211, 143, '#c0c0c0') + rect(130, 0, 121, 143, '#eaf1ff') + rect(251, 0, 1, 143, '#999')
    + rect(252, 0, 2, 143, '#dde4f4') + rect(254, 0, 127, 143, '#d6d6d6') + rect(381, 0, 1, 143, '#888')
    + `<path d="${peaks}" fill="#3232c8"/><path d="${rms}" fill="#6464dc"/></g>`;
});

// Time fields: one cell for each character, then the format menu
document.querySelectorAll('.time').forEach(field => {
  const cells = [...field.dataset.time].map(c => `<span class="${c === '.' ? 'dot' : /[hms]/.test(c) ? c : 'digit'}">${c}</span>`).join('');
  field.innerHTML = `<div class="digits">${cells}</div><button aria-label="Time format"><svg viewBox="0 0 8 4"><path d="M0 0h8L4 4z"/></svg></button>`;
});
```
